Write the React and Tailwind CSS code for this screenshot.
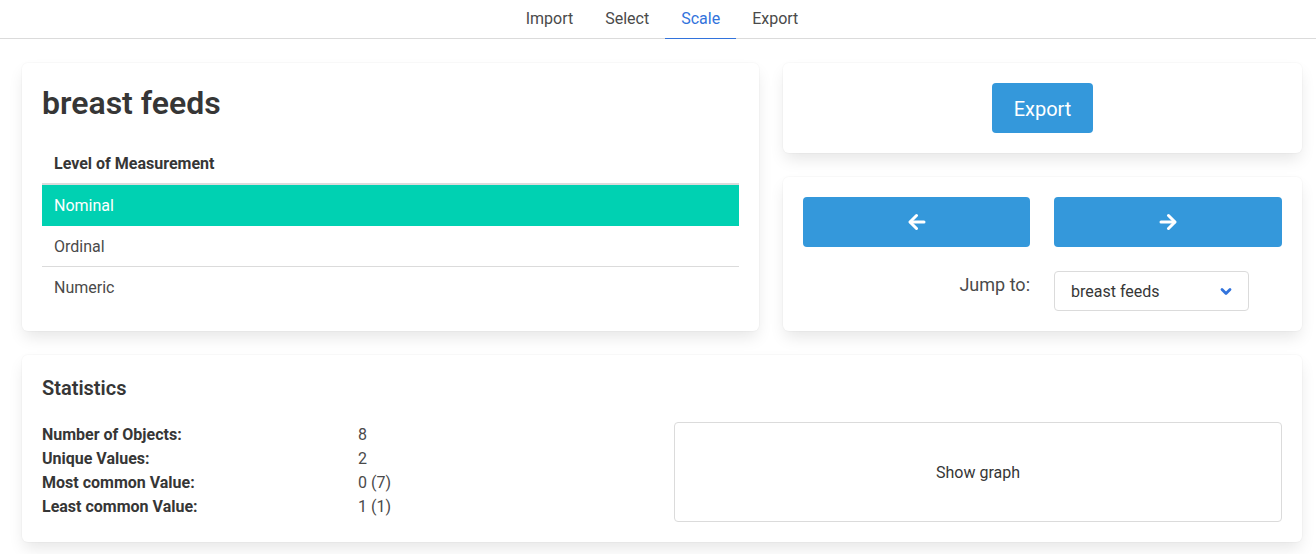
import React from 'react';

const card = "bg-white rounded-md shadow-[0_8px_16px_-2px_rgba(10,10,10,0.1),0_0_0_1px_rgba(10,10,10,0.02)] p-5";

function ArrowLeft() {
  return (
    <svg width="18" height="18" viewBox="0 0 18 18" fill="none" stroke="white" strokeWidth="3" strokeLinecap="round" strokeLinejoin="round">
      <path d="M16 9H2.5" />
      <path d="M8.5 2.5 2 9l6.5 6.5" />
    </svg>
  );
}

function ArrowRight() {
  return (
    <svg width="18" height="18" viewBox="0 0 18 18" fill="none" stroke="white" strokeWidth="3" strokeLinecap="round" strokeLinejoin="round">
      <path d="M2 9h13.5" />
      <path d="M9.5 2.5 16 9l-6.5 6.5" />
    </svg>
  );
}

function Chevron() {
  return (
    <svg width="12" height="9" viewBox="0 0 12 9" fill="none" stroke="#3273dc" strokeWidth="2.8" strokeLinecap="round" strokeLinejoin="round">
      <path d="M2 2.5 6 6.5 10 2.5" />
    </svg>
  );
}

export default function App() {
  const tabs = ["Import", "Select", "Scale", "Export"];
  return (
    <div className="min-h-[554px] bg-white font-['Roboto','Liberation_Sans',sans-serif] text-[#4a4a4a] text-base">
      <nav className="flex justify-center border-b border-[#dbdbdb] h-[39px] pl-[8px]">
        {tabs.map((t) => (
          <a
            key={t}
            className={
              "px-4 pt-[7px] pb-[7px] leading-6 -mb-px border-b " +
              (t === "Scale" ? "text-[#3273dc] border-[#3273dc]" : "text-[#4a4a4a] border-[#dbdbdb]")
            }
          >
            {t}
          </a>
        ))}
      </nav>

      <div className="pl-[22px] pt-6 w-[1302px]">
        <div className="flex gap-6 items-stretch">
          <div className={card + " w-[737px]"}>
            <h1 className="text-[32px] leading-9 font-semibold text-[#363636] pt-[2px] mb-[22px]">breast feeds</h1>
            <div className="flex flex-col">
              <div className="px-3 pt-[9px] pb-[7px] leading-6 font-bold text-[#363636] border-b-2 border-[#dbdbdb]">Level of Measurement</div>
              <div className="px-3 pt-[9px] pb-[7px] leading-6 bg-[#00d1b2] text-white border-b border-[#00d1b2]">Nominal</div>
              <div className="px-3 pt-[9px] pb-[7px] leading-6 border-b border-[#dbdbdb]">Ordinal</div>
              <div className="px-3 pt-[9px] pb-[7px] leading-6">Numeric</div>
            </div>
          </div>

          <div className="w-[519px] flex flex-col gap-6">
            <div className={card + " flex justify-center"}>
              <button className="h-[50px] w-[101px] rounded bg-[#3498db] text-white text-xl pt-[2px]">Export</button>
            </div>
            <div className={card + " grid grid-cols-[227px_228px] gap-6"}>
              <button className="h-[50px] rounded bg-[#3498db] flex items-center justify-center"><ArrowLeft /></button>
              <button className="h-[50px] rounded bg-[#3498db] flex items-center justify-center"><ArrowRight /></button>
              <div className="text-lg leading-[27px] text-right">Jump to:</div>
              <div className="h-10 w-[195px] border border-[#dbdbdb] rounded flex items-center justify-between pl-4 pr-4">
                <span className="text-[#363636] pt-px">breast feeds</span>
                <Chevron />
              </div>
            </div>
          </div>
        </div>

        <div className={card + " mt-6"}>
          <h2 className="text-xl leading-[23px] font-semibold text-[#363636] pt-[2px] mb-[22px]">Statistics</h2>
          <div className="grid grid-cols-2 gap-6">
            <div className="grid grid-cols-[316px_1fr] leading-6 content-start pt-px">
              <span className="font-bold text-[#363636]">Number of Objects:</span><span>8</span>
              <span className="font-bold text-[#363636]">Unique Values:</span><span>2</span>
              <span className="font-bold text-[#363636]">Most common Value:</span><span>0 (7)</span>
              <span className="font-bold text-[#363636]">Least common Value:</span><span>1 (1)</span>
            </div>
            <div className="h-[100px] border border-[#dbdbdb] rounded flex items-center justify-center text-[#363636] pt-px">Show graph</div>
          </div>
        </div>
      </div>
    </div>
  );
}
